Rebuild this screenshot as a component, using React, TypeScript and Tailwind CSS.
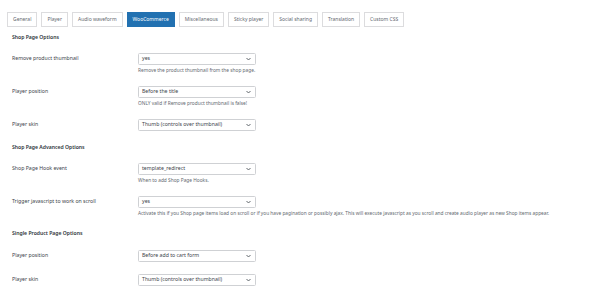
import React from "react";

const tabs = [
  "General",
  "Player",
  "Audio waveform",
  "WooCommerce",
  "Miscellaneous",
  "Sticky player",
  "Social sharing",
  "Translation",
  "Custom CSS",
];

function Chevron() {
  return (
    <svg width="5" height="4" viewBox="0 0 10 6" className="shrink-0">
      <path d="M1 1l4 4 4-4" fill="none" stroke="#50575e" strokeWidth="1.8" />
    </svg>
  );
}

function Select({ value }: { value: string }) {
  return (
    <div className="flex h-[12px] w-[118px] items-center justify-between rounded-[1.5px] border border-[#cfd1d4] bg-white pl-[3px] pr-[4px] text-[5.2px] leading-none text-[#3c434a]">
      <span>{value}</span>
      <Chevron />
    </div>
  );
}

function Row({ label, value, desc }: { label: string; value: string; desc?: string }) {
  return (
    <div className="flex py-[6px]">
      <div className="flex h-[12px] w-[126px] shrink-0 items-center text-[5.2px] leading-none text-[#3c434a]">
        {label}
      </div>
      <div className="flex flex-col">
        <Select value={value} />
        {desc && (
          <div className="mt-[1px] h-[8px] whitespace-nowrap text-[4.8px] leading-[8px] text-[#646970]">
            {desc}
          </div>
        )}
      </div>
    </div>
  );
}

function Header({ children, className = "" }: { children: React.ReactNode; className?: string }) {
  return (
    <div className={"h-[8px] text-[5.1px] font-semibold leading-[8px] text-[#2c3338] " + className}>
      {children}
    </div>
  );
}

export default function App() {
  return (
    <div
      className="h-[300px] w-[590px] overflow-hidden bg-white"
      style={{ fontFamily: '"Noto Sans", "Open Sans", sans-serif' }}
    >
      <div className="flex gap-[4px] pl-[7px] pt-[12px]">
        {tabs.map((t) => (
          <div
            key={t}
            className={
              "flex h-[15px] items-center border px-[5px] text-[5px] leading-none " +
              (t === "WooCommerce"
                ? "border-[#2271b1] bg-[#2271b1] text-white"
                : "border-[#dcdcde] bg-white text-[#646970]")
            }
          >
            {t}
          </div>
        ))}
      </div>
      <div className="pl-[12px]">
        <Header className="mt-[6px] mb-[6px]">Shop Page Options</Header>
        <Row label="Remove product thumbnail" value="yes" desc="Remove the product thumbnail from the shop page." />
        <Row label="Player position" value="Before the title" desc="ONLY valid if Remove product thumbnail is false!" />
        <Row label="Player skin" value="Thumb (controls over thumbnail)" />
        <Header className="mt-[6px] mb-[6px]">Shop Page Advanced Options</Header>
        <Row label="Shop Page Hook event" value="template_redirect" desc="When to add Shop Page Hooks." />
        <Row
          label="Trigger javascript to work on scroll"
          value="yes"
          desc="Activate this if you Shop page items load on scroll or if you have pagination or possibly ajax. This will execute javascript as you scroll and create audio player as new Shop items appear."
        />
        <Header className="mt-[6px] mb-[7px]">Single Product Page Options</Header>
        <Row label="Player position" value="Before add to cart form" />
        <Row label="Player skin" value="Thumb (controls over thumbnail)" />
      </div>
    </div>
  );
}
